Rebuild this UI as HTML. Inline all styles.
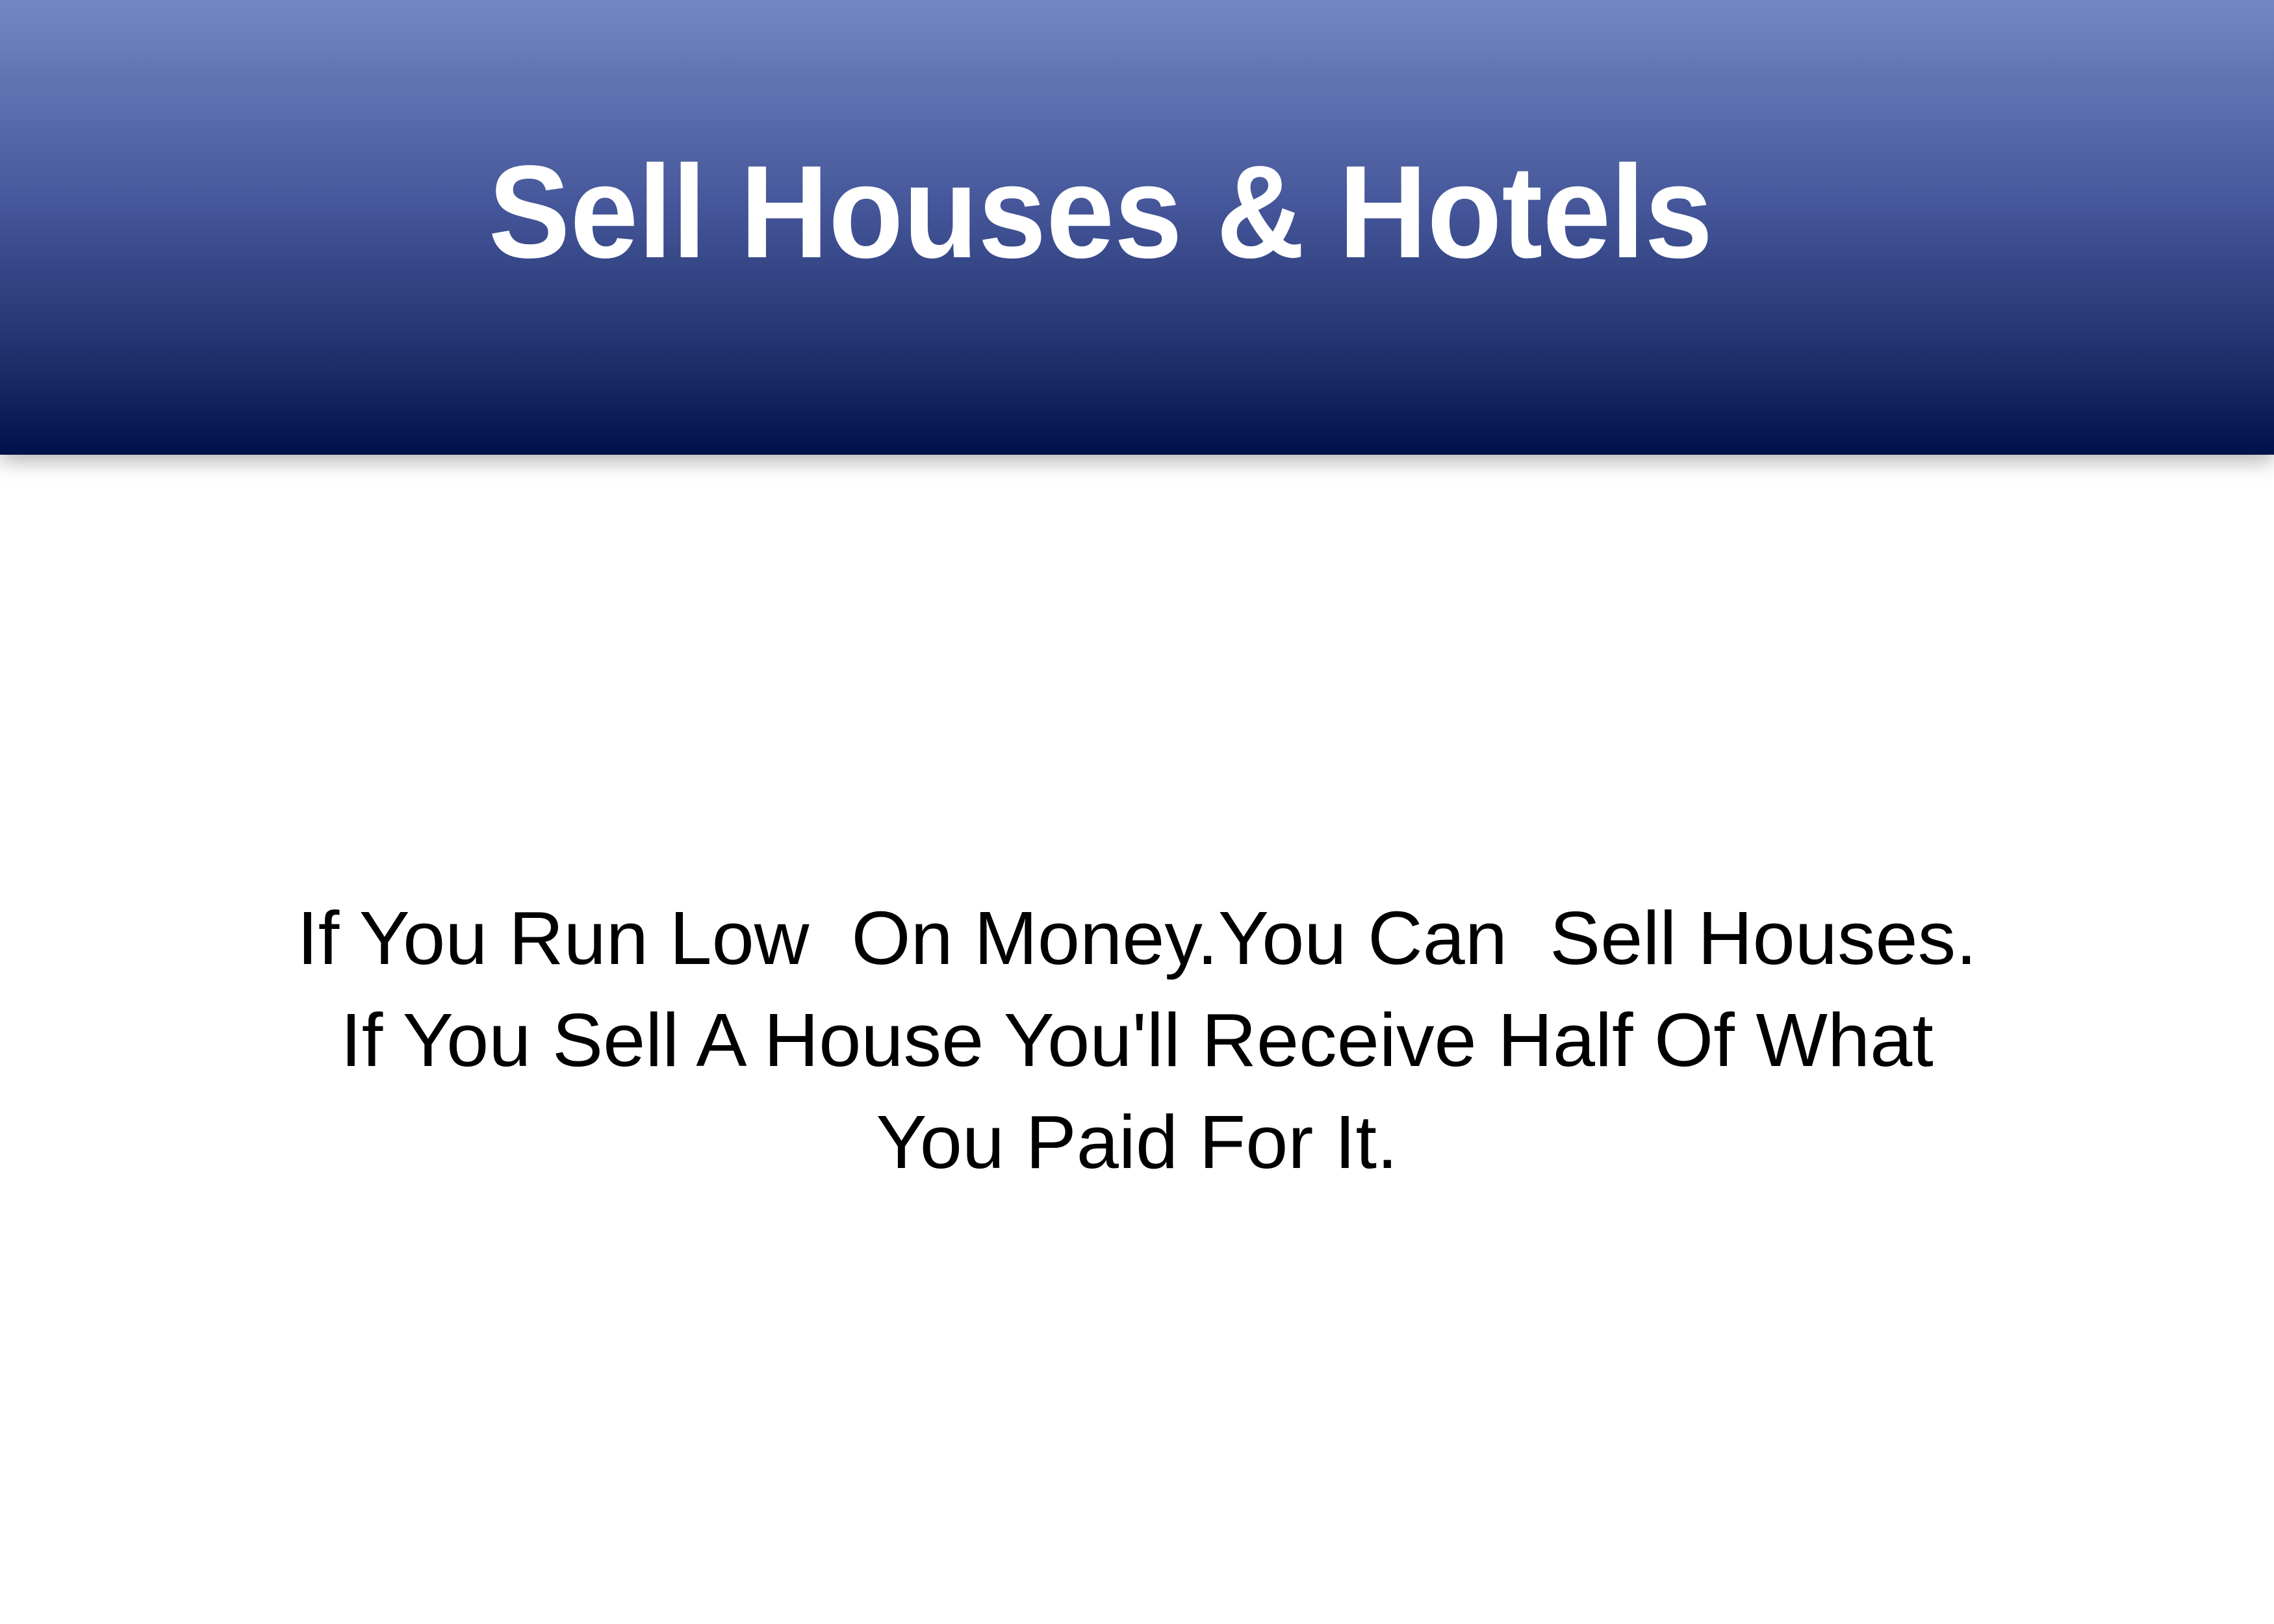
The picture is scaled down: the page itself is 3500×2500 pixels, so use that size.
<!DOCTYPE html>
<html><head><meta charset="utf-8"><style>
html,body{margin:0;padding:0;width:3500px;height:2500px;background:#fff;overflow:hidden;font-family:"Liberation Sans",sans-serif}
.hdr{position:absolute;left:0;top:0;width:3500px;height:700px;background:linear-gradient(#7387c2,#45579a 45%,#1d2e69 80%,#00114a);box-shadow:0 10px 30px rgba(0,0,0,0.3)}
.t{position:absolute;left:0;width:3388px;top:214px;text-align:center;color:#fff;font-weight:bold;font-size:203px;line-height:1.117;white-space:nowrap;transform:scaleX(0.928);transform-origin:1694px 0}
.l{position:absolute;left:0;width:3500px;text-align:center;color:#000;font-size:116px;line-height:1.117;white-space:pre;transform:scaleX(1.01);transform-origin:1750px 0}
</style></head><body>
<div class="hdr"><div class="t">Sell Houses &amp; Hotels</div></div>
<div class="l" style="top:1380px">If You Run Low  On Money.You Can  Sell Houses.</div>
<div class="l" style="top:1537px">If You Sell A House You'll Receive Half Of What</div>
<div class="l" style="top:1694px">You Paid For It.</div>
</body></html>
